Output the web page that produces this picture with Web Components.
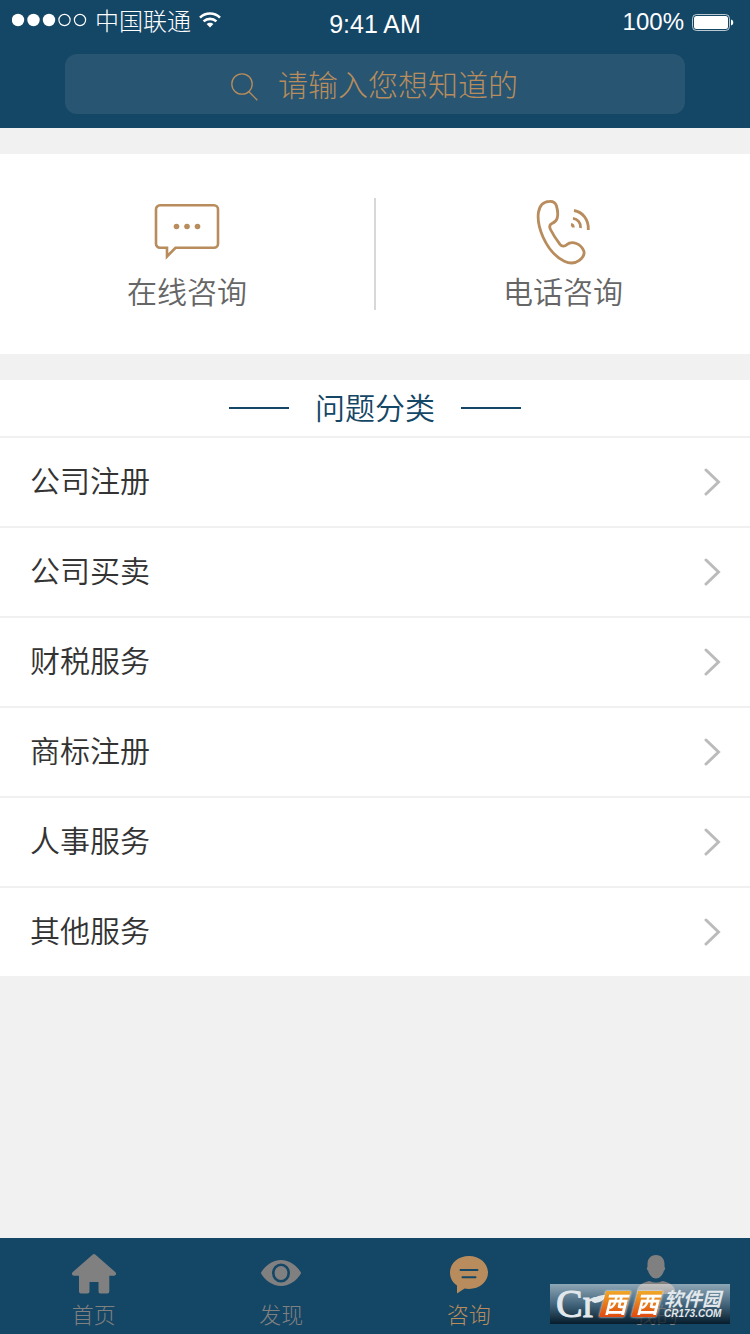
<!DOCTYPE html>
<html lang="zh-CN">
<head>
<meta charset="utf-8">
<meta name="viewport" content="width=device-width, initial-scale=1">
<title>咨询</title>
<style>
body{
  margin: 0;
  background: #f1f1f1;
  font-family: "Liberation Sans", "Noto Sans CJK SC", sans-serif;
}
</style>
</head>
<body>
<consult-page></consult-page>

<script>
function define(name, html) {
  const template = document.createElement('template');
  template.innerHTML = html;

  window.customElements.define(name, class extends HTMLElement {
    constructor() {
      super();
      this.attachShadow({ mode: 'open' });
      this.shadowRoot.appendChild(template.content.cloneNode(true));
    }
  });
}

define('status-bar', `
<style>
:host{
  display: grid;
  grid-template-columns: 1fr auto 1fr;
  align-items: start;
  height: 54px;
  padding: 0 12px;
  box-sizing: border-box;
  color: #fff;
  font-size: 24px;
  line-height: 28px;
}
svg{
  display: block;
}
.left, .right{
  display: flex;
  align-items: center;
  gap: 8px;
}
.left{
  padding-top: 6px;
  font-family: "Noto Sans CJK SC", sans-serif;
  font-weight: 300;
}
.time{
  padding-top: 10px;
  font-size: 25px;
}
.right{
  justify-content: flex-end;
  padding-top: 8px;
}
</style>
<div class="left">
  <svg width="75" height="14" viewBox="0 0 75 14" fill="#fff">
    <circle cx="6" cy="7" r="6.2"/><circle cx="21.5" cy="7" r="6.2"/><circle cx="37" cy="7" r="6.2"/>
    <g fill="none" stroke="#fff" stroke-width="1.2"><circle cx="52.5" cy="7" r="5.6"/><circle cx="68" cy="7" r="5.6"/></g>
  </svg>
  <span>中国联通</span>
  <svg width="24" height="16" viewBox="0 0 24 16" fill="none" stroke="#fff" stroke-width="2.6">
    <path d="M1 5.6C6.6.2 15.4.2 21 5.6"/>
    <path d="M4.6 9.4c3.6-3.4 9.2-3.4 12.8 0"/>
    <path d="M11 15.4 7.6 12c1.9-1.8 4.900-1.8 6.800 0z" fill="#fff" stroke="none"/>
  </svg>
</div>
<div class="time">9:41 AM</div>
<div class="right">
  <span>100%</span>
  <svg width="46" height="17" viewBox="0 0 46 17">
    <rect x=".5" y=".5" width="37" height="16" rx="4" fill="none" stroke="#fff" stroke-opacity=".7"/>
    <rect x="2" y="2" width="34" height="13" rx="2.5" fill="#fff"/>
    <path d="M39 5.5c3 .5 3 5.5 0 6z" fill="#fff"/>
  </svg>
</div>
`);

define('search-box', `
<style>
:host{
  display: block;
  padding: 0 65px 14px;
}
form{
  display: flex;
  align-items: center;
  justify-content: center;
  gap: 20px;
  height: 60px;
  border-radius: 12px;
  background: #285672;
}
label{
  padding-top: 6px;
}
svg{
  display: block;
}
input{
  width: 242px;
  height: 58px;
  padding: 0 0 2px;
  box-sizing: border-box;
  border: 0;
  outline: 0;
  background: none;
  color: #b88c5c;
  font: 300 30px "Noto Sans CJK SC", sans-serif;
}
input::placeholder{
  color: #b88c5c;
  opacity: 1;
}
</style>
<form role="search">
  <label for="keyword" aria-label="搜索">
    <svg width="28" height="28" viewBox="0 0 28 28" fill="none" stroke="#b88c5c" stroke-width="1.3">
      <circle cx="12" cy="11" r="10.2"/>
      <path d="m18.5 18.2 8.800 9"/>
    </svg>
  </label>
  <input id="keyword" type="text" placeholder="请输入您想知道的">
</form>
`);

define('contact-panel', `
<style>
:host{
  display: flex;
  align-items: center;
  height: 200px;
  background: #fff;
}
::slotted(contact-way){
  flex: 1;
}
::slotted(contact-way:first-child){
  border-right: 2px solid #d8d8d8;
}
</style>
<slot></slot>
`);

define('contact-way', `
<style>
:host{
  display: block;
  height: 112px;
}
button{
  display: flex;
  flex-direction: column;
  align-items: center;
  gap: 4px;
  width: 100%;
  height: 112px;
  padding: 0;
  border: 0;
  background: none;
  color: #666;
  font: 350 30px/40px "Noto Sans CJK SC", sans-serif;
  cursor: pointer;
}
::slotted(svg){
  display: block;
}
</style>
<button type="button"><slot name="icon"></slot><span><slot></slot></span></button>
`);

define('section-title', `
<style>
:host{
  display: flex;
  align-items: center;
  justify-content: center;
  gap: 26px;
  height: 56px;
  background: #fff;
}
:host::before, :host::after{
  content: "";
  width: 60px;
  height: 2px;
  background: #144666;
}
h2{
  margin: 0;
  color: #144666;
  font: 350 30px/40px "Noto Sans CJK SC", sans-serif;
  padding-bottom: 4px;
}
</style>
<h2><slot></slot></h2>
`);

define('topic-item', `
<style>
:host{
  display: block;
  border-top: 2px solid #f0f0f0;
  background: #fff;
}
a{
  display: flex;
  align-items: center;
  justify-content: space-between;
  height: 88px;
  padding: 0 29px 0 30px;
  color: #333;
  font: 350 30px/40px "Noto Sans CJK SC", sans-serif;
  text-decoration: none;
}
span{
  padding-bottom: 6px;
}
</style>
<a href="#"><span><slot></slot></span>
  <svg width="17" height="28" viewBox="0 0 17 28" fill="none" stroke="#bbb" stroke-width="3" stroke-linecap="round">
    <path d="m2 2 12.5 12L2 26"/>
  </svg>
</a>
`);

define('tab-bar', `
<style>
:host{
  display: block;
  background: #144666;
}
nav{
  display: grid;
  grid-template-columns: repeat(4, 1fr);
}
</style>
<nav><slot></slot></nav>
`);

define('tab-item', `
<style>
:host{
  display: block;
  color: #808080;
}
:host([active]){
  color: #b88c5c;
}
a{
  display: flex;
  flex-direction: column;
  align-items: center;
  height: 96px;
  padding-top: 14px;
  box-sizing: border-box;
  color: inherit;
  font: 300 22px/34px "Noto Sans CJK SC", sans-serif;
  text-decoration: none;
}
::slotted(svg){
  display: block;
}
</style>
<a href="#"><slot name="icon"></slot><span><slot></slot></span></a>
`);

define('site-badge', `
<style>
:host{
  display: grid;
  grid-template-columns: 43px 64px 1fr;
  align-items: center;
  width: 180px;
  height: 40px;
  padding-left: 6px;
  box-sizing: border-box;
  background: linear-gradient(rgba(255,255,255,.52), rgba(140,150,160,.4) 50%, rgba(0,14,24,.75));
  color: #e2e8ec;
  white-space: nowrap;
}
.mark{
  display: flex;
  font: 40px/40px "Liberation Serif", serif;
  -webkit-text-stroke: 1px #e2e8ec;
}
.mark svg{
  flex: none;
  margin: 10px 0 0 -4px;
}
.tiles{
  display: flex;
  filter: drop-shadow(0 0 1px #fff);
}
.tiles b{
  width: 32px;
  height: 26px;
  background: linear-gradient(#f0a828, #e04a10);
  clip-path: polygon(22% 0, 100% 0, 78% 100%, 0 100%);
  color: #fff;
  text-align: center;
  font: italic bold 23px/24px "Noto Sans CJK SC", sans-serif;
}
.name{
  padding-left: 1px;
}
.name b{
  display: block;
  font: italic bold 19px/20px "Noto Sans CJK SC", sans-serif;
}
.name small{
  display: block;
  font: italic bold 10px/12px "Liberation Sans", sans-serif;
}
</style>
<span class="mark">Cr<svg width="14" height="12" viewBox="0 0 14 12" fill="currentColor"><path d="M0 8C2 2 8 1 14 1 12 7 7 10 0 8z"/></svg></span>
<span class="tiles"><b>西</b><b>西</b></span>
<span class="name"><b>软件园</b><small>CR173.COM</small></span>
`);

define('consult-page', `
<style>
:host{
  display: flex;
  flex-direction: column;
  position: relative;
  min-height: 100vh;
}
header{
  background: #144666;
}
main{
  flex: 1;
  display: flex;
  flex-direction: column;
  gap: 26px;
  padding: 26px 0;
}
site-badge{
  position: absolute;
  right: 20px;
  bottom: 10px;
}
</style>
<header>
  <status-bar></status-bar>
  <search-box></search-box>
</header>
<main>
  <contact-panel>
    <contact-way>
      <svg slot="icon" width="66" height="68" viewBox="0 0 66 68" fill="none" stroke="#b88c5c" stroke-width="2.6">
        <path d="M6 7.3h54a4 4 0 0 1 4 4v34.5a4 4 0 0 1-4 4H21.500L13 58.500v-8.700H6a4 4 0 0 1-4-4V11.300a4 4 0 0 1 4-4z"/>
        <g fill="#b88c5c" stroke="none"><circle cx="22.5" cy="28.5" r="2.8"/><circle cx="33" cy="28.5" r="2.8"/><circle cx="43.5" cy="28.5" r="2.8"/></g>
      </svg>
      在线咨询
    </contact-way>
    <contact-way>
      <svg slot="icon" width="56" height="68" viewBox="0 0 56 68" fill="none" stroke="#b88c5c" stroke-width="2.8">
        <path d="M14.500 3.400C18 3.200 20.500 4.500 21.500 8c1.300 4.500 1.700 9 .6 12.500-1 3.200-3 4-5.300 5-2.400 1.200-2.600 3.300-1.300 6 2.700 5.500 6.200 10.500 9.500 14.800 2 2.400 4.800 2.200 6.800.4 2.700-2.200 6-2.500 9.500-1.200 3.500 1.300 6.300 4.500 7.500 7.500 1 3.300-1.400 7-4.500 9.300-4 3-10 3.200-15 .9C20.500 59 12.500 49 8 39 4.300 30.500 2.300 22.500 3.400 14.500 4.400 8.500 8 3.600 14.500 3.400z"/>
        <path d="M39 12.5C47.500 14 54 21.5 53.300 32"/><path d="M38 20.3c4.500.6 8 4.500 7.500 9.700"/><path d="M36 26.500c1.500.2 2.300 1.200 2.300 3"/>
      </svg>
      电话咨询
    </contact-way>
  </contact-panel>
  <section>
    <section-title>问题分类</section-title>
    <topic-item>公司注册</topic-item>
    <topic-item>公司买卖</topic-item>
    <topic-item>财税服务</topic-item>
    <topic-item>商标注册</topic-item>
    <topic-item>人事服务</topic-item>
    <topic-item>其他服务</topic-item>
  </section>
</main>
<tab-bar>
  <tab-item>
    <svg slot="icon" width="46" height="44" viewBox="0 0 46 44" fill="currentColor">
      <path d="M21.8 2.6q1.2-1.1 2.4 0l20 17.4c1.7 1.6.8 3.8-1.2 3.800h-4.700V39.500q0 2-2 2h-7q-1.800 0-1.800-2V30h-9v9.500q0 2-2 2h-6.500q-2 0-2-2V23.800H3C1 23.800.1 21.600 1.800 20z"/>
    </svg>
    首页
  </tab-item>
  <tab-item>
    <svg slot="icon" width="42" height="44" viewBox="0 0 42 44" fill="currentColor">
      <path d="M.8 21C5 13.5 12.500 8 21 8s16 5.500 20.200 13C37 28.500 29.500 34 21 34S5 28.500.8 21z"/>
      <ellipse cx="21" cy="21" rx="7.7" ry="8.3" stroke="#144666" stroke-width="2.6"/>
    </svg>
    发现
  </tab-item>
  <tab-item active>
    <svg slot="icon" width="40" height="44" viewBox="0 0 40 44" fill="currentColor">
      <path d="M20 4C9.500 4 1 11 1 20.500c0 5.500 2.500 10 7 13V41.500l7.600-5c1.400.3 2.900.4 4.400.4 10.500 0 19-7 19-16.400S30.500 4 20 4z"/>
      <path d="M11.500 18h17M13.500 25.200h13" stroke="#144666" stroke-width="2" stroke-linecap="round"/>
    </svg>
    咨询
  </tab-item>
  <tab-item>
    <svg slot="icon" width="42" height="44" viewBox="0 0 42 44" fill="currentColor">
      <path d="M21 3c-5.500 0-8.500 4-8.500 9v3c-1 .5-.8 3 .5 3.500 1.200 4.500 4.500 8 8 8s6.800-3.500 8-8c1.300-.5 1.500-3 .5-3.500v-3c0-5-3-9-8.500-9z"/>
      <path d="M14.500 29q6.500 3 13 0c6 1.500 11 3.500 12.500 9V42H2v-4C3.500 32.500 8.500 30.500 14.500 29z"/>
    </svg>
    我的
  </tab-item>
</tab-bar>
<site-badge></site-badge>
`);
</script>
</body>
</html>
